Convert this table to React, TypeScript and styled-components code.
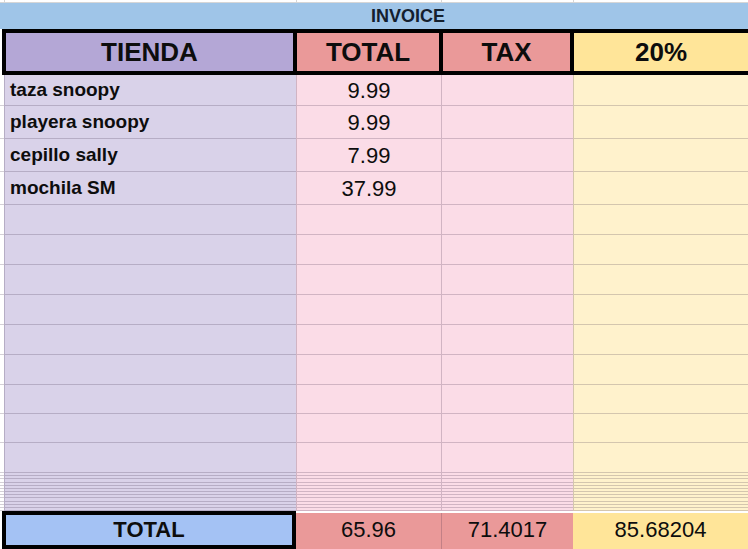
import React from "react";
import styled, { createGlobalStyle } from "styled-components";

const GlobalStyle = createGlobalStyle`
  html, body { margin: 0; padding: 0; background: #ffffff; overflow: hidden; }
  body { font-family: "Liberation Sans", Arial, sans-serif; color: #0d0d0d; }
`;

type Tone = "white" | "lav" | "pink" | "yellow";

const TONES: Record<Tone, string> = {
  white: "#ffffff",
  lav: "#d9d2e9",
  pink: "#fbdce7",
  yellow: "#fff2cc",
};

const COLS = "4px 292px 145px 132px 175px";
const TONE_ORDER: Tone[] = ["white", "lav", "pink", "pink", "yellow"];
const LINE = "1px solid rgba(60, 40, 70, 0.22)";

const Sheet = styled.div`
  width: 748px;
  height: 549px;
  overflow: hidden;
  display: flex;
  flex-direction: column;
`;

const GridRow = styled.div<{ $h: number }>`
  display: grid;
  grid-template-columns: ${COLS};
  height: ${(p) => p.$h}px;
  flex: none;
  box-sizing: border-box;
`;

const Cell = styled.div<{ $tone: Tone; $first?: boolean; $align?: "left" | "center" }>`
  box-sizing: border-box;
  background: ${(p) => TONES[p.$tone]};
  border-left: ${(p) => (p.$first ? "none" : LINE)};
  border-bottom: ${LINE};
  display: flex;
  align-items: center;
  justify-content: ${(p) => (p.$align === "center" ? "center" : "flex-start")};
  padding: 0 0 0 ${(p) => (p.$align === "center" ? 0 : 5)}px;
  overflow: hidden;
  white-space: nowrap;
`;

const Label = styled.span`
  font-weight: 700;
  font-size: 19px;
`;

const Num = styled.span`
  font-size: 22px;
  padding-top: 1px;
`;

const TopCell = styled.div<{ $first?: boolean }>`
  background: #fff;
  border-left: ${(p) => (p.$first ? "none" : "1px solid #d6d6d6")};
  border-bottom: 1px solid #d6d6d6;
  box-sizing: border-box;
`;

const InvoiceBar = styled.div`
  height: 26px;
  flex: none;
  background: #9fc5e8;
  display: flex;
  align-items: center;
  justify-content: center;
  /* the merged cell runs on past the right edge, so its centre sits at x≈408 */
  padding: 1px 0 0 68px;
  font-weight: 700;
  font-size: 18px;
  color: #14202e;
  box-sizing: border-box;
`;

const HeaderBand = styled.div`
  margin-left: 2px;
  height: 46px;
  flex: none;
  box-sizing: border-box;
  display: grid;
  grid-template-columns: 287px 142px 127px 174px;
  gap: 4px;
  padding: 4px 0 4px 4px;
  background: #000;
`;

const HeaderCell = styled.div<{ $bg: string }>`
  background: ${(p) => p.$bg};
  display: flex;
  align-items: center;
  justify-content: center;
  font-weight: 700;
  font-size: 26px;
  color: #0d0d0d;
`;

const ThinStack = styled.div`
  height: 38px;
  flex: none;
  display: flex;
  flex-direction: column;
`;

const ThinRow = styled.div`
  flex: 1;
  display: grid;
  grid-template-columns: ${COLS};
`;

const TotalRow = styled.div`
  display: grid;
  grid-template-columns: 294px 145px 132px 175px;
  margin-left: 2px;
  height: 38px;
  flex: none;
`;

const TotalLabel = styled.div`
  box-sizing: border-box;
  border: 4px solid #000;
  background: #a4c2f4;
  display: flex;
  align-items: center;
  justify-content: center;
  font-weight: 700;
  font-size: 22px;
  color: #0d0d0d;
`;

const TotalCell = styled.div<{ $bg: string; $line?: boolean }>`
  box-sizing: border-box;
  margin-top: 2px;
  background: ${(p) => p.$bg};
  border-left: ${(p) => (p.$line ? LINE : "none")};
  display: flex;
  align-items: center;
  justify-content: center;
  font-size: 22px;
  padding-bottom: 3px;
`;

const items: { name: string; price: string; h: number }[] = [
  { name: "taza snoopy", price: "9.99", h: 31 },
  { name: "playera snoopy", price: "9.99", h: 33 },
  { name: "cepillo sally", price: "7.99", h: 33 },
  { name: "mochila SM", price: "37.99", h: 33 },
];

const emptyHeights = [30, 30, 30, 30, 30, 30, 29, 29, 30];

function EmptyCells() {
  return (
    <>
      {TONE_ORDER.map((t, i) => (
        <Cell key={i} $tone={t} $first={i === 0} />
      ))}
    </>
  );
}

export default function App() {
  return (
    <>
      <GlobalStyle />
      <Sheet>
        <GridRow $h={3}>
          {TONE_ORDER.map((_, i) => (
            <TopCell key={i} $first={i === 0} />
          ))}
        </GridRow>
        <InvoiceBar>INVOICE</InvoiceBar>
        <HeaderBand>
          <HeaderCell $bg="#b4a7d6">TIENDA</HeaderCell>
          <HeaderCell $bg="#ea9999">TOTAL</HeaderCell>
          <HeaderCell $bg="#ea9999">TAX</HeaderCell>
          <HeaderCell $bg="#ffe599">20%</HeaderCell>
        </HeaderBand>
        {items.map((it) => (
          <GridRow key={it.name} $h={it.h}>
            <Cell $tone="white" $first />
            <Cell $tone="lav">
              <Label>{it.name}</Label>
            </Cell>
            <Cell $tone="pink" $align="center">
              <Num>{it.price}</Num>
            </Cell>
            <Cell $tone="pink" />
            <Cell $tone="yellow" />
          </GridRow>
        ))}
        {emptyHeights.map((h, i) => (
          <GridRow key={i} $h={h}>
            <EmptyCells />
          </GridRow>
        ))}
        <ThinStack>
          {Array.from({ length: 12 }).map((_, i) => (
            <ThinRow key={i}>
              <EmptyCells />
            </ThinRow>
          ))}
        </ThinStack>
        <TotalRow>
          <TotalLabel>TOTAL</TotalLabel>
          <TotalCell $bg="#ea9999">65.96</TotalCell>
          <TotalCell $bg="#ea9999" $line>
            71.4017
          </TotalCell>
          <TotalCell $bg="#ffe599">85.68204</TotalCell>
        </TotalRow>
      </Sheet>
    </>
  );
}
